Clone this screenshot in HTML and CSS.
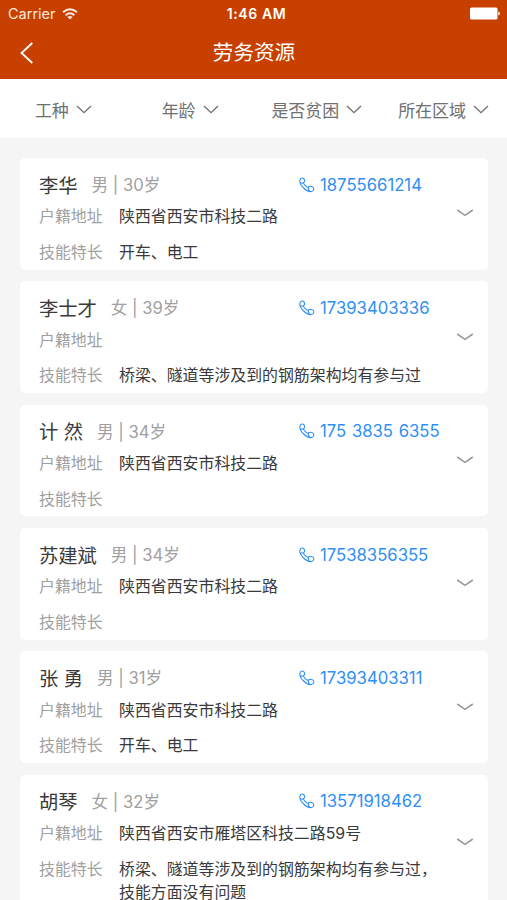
FILE: index.html
```
<!DOCTYPE html>
<html lang="zh-CN">
<head>
    <meta charset="UTF-8">
    <title>劳务资源</title>
    <link rel="stylesheet" href="styles.css">
</head>
<body>
    <!-- icons used in the list -->
    <svg class="sprite">
        <symbol id="down" viewBox="0 0 16 9">
            <path d="M1 1l7 6.600L15 1"/>
        </symbol>
        <symbol id="more" viewBox="0 0 18 8">
            <path d="M1.200 1L9 6.400 16.800 1"/>
        </symbol>
        <symbol id="phone" viewBox="0 0 16 16">
            <path d="M1.300 2.200C2 .8 4 .6 4.900 1.800c.9 1.300.8 2.800-.2 3.900-.5.6.2 1.500 1.600 2.900s2.600 1.900 3.200 1.400c1.300-1 2.900-.9 4.400.1 1.300.9 1.200 2.900-.1 3.800-2.200 1.400-6 .2-9.100-2.900S.2 4.500 1.300 2.200z"/>
            <path d="M1.500 5.500q1.800 1.200 3.100.3M9.500 10q-1 1.400 1 4"/>
        </symbol>
    </svg>

    <header class="header">
        <div class="status">
            <div class="carrier">Carrier
                <svg class="wifi" width="16" height="12" viewBox="0 0 16 12">
                    <path d="M1 4.300q7-6 14 0M3.600 7.200q4.400-3.800 8.800 0"/>
                    <path class="dot" d="M5.400 8.900q2.600-2 5.200 0L8 11.600z"/>
                </svg>
            </div>
            <div class="time">1:46 AM</div>
            <div class="power">
                <svg width="30" height="13" viewBox="0 0 30 13">
                    <rect x="0" y="0.500" width="27.500" height="12" rx="1.500"/>
                    <path d="M28.300 4.500q1.700.6 1.700 2t-1.700 2z"/>
                </svg>
            </div>
        </div>
        <div class="navbar">
            <svg class="back" width="14" height="22" viewBox="0 0 14 22"><path d="M12.300 1L1.500 11l10.800 10"/></svg>
            <h1>劳务资源</h1>
        </div>
    </header>

    <nav class="filters">
        <div class="filter">工种<svg><use href="#down"/></svg></div>
        <div class="filter">年龄<svg><use href="#down"/></svg></div>
        <div class="filter">是否贫困<svg><use href="#down"/></svg></div>
        <div class="filter">所在区域<svg><use href="#down"/></svg></div>
    </nav>

    <main class="list">
        <section class="card">
            <div class="top">
                <div class="person"><b>李华</b><span>男 | 30岁</span></div>
                <a class="phone"><svg><use href="#phone"/></svg>18755661214</a>
            </div>
            <div class="row"><label>户籍地址</label><p>陕西省西安市科技二路</p></div>
            <div class="row"><label>技能特长</label><p>开车、电工</p></div>
            <svg class="more"><use href="#more"/></svg>
        </section>

        <section class="card">
            <div class="top">
                <div class="person"><b>李士才</b><span>女 | 39岁</span></div>
                <a class="phone"><svg><use href="#phone"/></svg>17393403336</a>
            </div>
            <div class="row"><label>户籍地址</label><p></p></div>
            <div class="row"><label>技能特长</label><p>桥梁、隧道等涉及到的钢筋架构均有参与过</p></div>
            <svg class="more"><use href="#more"/></svg>
        </section>

        <section class="card">
            <div class="top">
                <div class="person"><b>计 然</b><span>男 | 34岁</span></div>
                <a class="phone"><svg><use href="#phone"/></svg>175 3835 6355</a>
            </div>
            <div class="row"><label>户籍地址</label><p>陕西省西安市科技二路</p></div>
            <div class="row"><label>技能特长</label><p></p></div>
            <svg class="more"><use href="#more"/></svg>
        </section>

        <section class="card">
            <div class="top">
                <div class="person"><b>苏建斌</b><span>男 | 34岁</span></div>
                <a class="phone"><svg><use href="#phone"/></svg>17538356355</a>
            </div>
            <div class="row"><label>户籍地址</label><p>陕西省西安市科技二路</p></div>
            <div class="row"><label>技能特长</label><p></p></div>
            <svg class="more"><use href="#more"/></svg>
        </section>

        <section class="card">
            <div class="top">
                <div class="person"><b>张 勇</b><span>男 | 31岁</span></div>
                <a class="phone"><svg><use href="#phone"/></svg>17393403311</a>
            </div>
            <div class="row"><label>户籍地址</label><p>陕西省西安市科技二路</p></div>
            <div class="row"><label>技能特长</label><p>开车、电工</p></div>
            <svg class="more"><use href="#more"/></svg>
        </section>

        <section class="card">
            <div class="top">
                <div class="person"><b>胡琴</b><span>女 | 32岁</span></div>
                <a class="phone"><svg><use href="#phone"/></svg>13571918462</a>
            </div>
            <div class="row"><label>户籍地址</label><p>陕西省西安市雁塔区科技二路59号</p></div>
            <div class="row"><label>技能特长</label><p>桥梁、隧道等涉及到的钢筋架构均有参与过，<br>技能方面没有问题</p></div>
            <svg class="more"><use href="#more"/></svg>
        </section>
    </main>
</body>
</html>
```

FILE: styles.css
```
* {
    box-sizing: border-box;
}

body {
    margin: 0;
    height: 900px;
    overflow: hidden;
    background: #f5f5f5;
    font-family: Inter, "Noto Sans CJK SC", sans-serif;
    color: #3a3a3a;
}

svg {
    fill: none;
    stroke: currentColor;
    flex: none;
}

.sprite {
    display: none;
}

.header {
    height: 79px;
    background: #c84000;
    color: white;
}

.status {
    display: grid;
    grid-template-columns: 1fr auto 1fr;
    align-items: center;
    height: 27px;
    padding: 0 7px 0 8px;
    font-size: 14.5px;
}

.carrier {
    display: flex;
    align-items: center;
    gap: 6px;
    color: #ffe9dc;
}

.wifi {
    stroke-width: 1.9;
}

.wifi .dot {
    fill: currentColor;
    stroke: none;
}

.time {
    padding-left: 5px;
    font-weight: 600;
    font-size: 14px;
    letter-spacing: 0.6px;
}

.power {
    display: flex;
    justify-content: flex-end;
}

.power svg {
    fill: white;
    stroke: none;
}

.navbar {
    display: grid;
    grid-template-columns: 1fr auto 1fr;
    align-items: center;
    height: 51px;
    padding: 0 20px;
}

.back {
    stroke-width: 1.8;
}

h1 {
    margin: 0;
    padding-left: 1px;
    font-size: 20.6px;
    font-weight: 400;
    line-height: 30px;
}

.filters {
    display: grid;
    grid-template-columns: repeat(4, 1fr);
    height: 59px;
    padding-top: 1px;
    background: white;
    color: #707070;
    font-size: 17px;
}

.filter {
    display: flex;
    justify-content: center;
    align-items: center;
    gap: 7px;
}

.filter svg {
    width: 16px;
    height: 9px;
    stroke-width: 1.3;
}

.list {
    display: flex;
    flex-direction: column;
    gap: 11.7px;
    padding: 20px 19px 0 20px;
}

.card {
    position: relative;
    flex: none;
    padding: 13px 19px 0;
    border-radius: 5px;
    background: white;
}

.top {
    display: flex;
    align-items: center;
    height: 27px;
    margin-bottom: 1.4px;
}

.person {
    display: flex;
    align-items: center;
    width: 260px;
    gap: 14px;
}

.person b {
    font-size: 19.3px;
    font-weight: 400;
}

.person span {
    padding-bottom: 1px;
    font-size: 16.6px;
    color: #a0a0a0;
}

.phone {
    display: flex;
    align-items: center;
    gap: 5px;
    color: #2e8ff5;
    font-size: 16.7px;
    white-space: pre;
    word-spacing: 1px;
}

.phone svg {
    width: 16px;
    height: 16px;
    stroke-width: 1.1;
}

.row {
    display: flex;
    gap: 16.5px;
    padding: 6px 0;
    font-size: 15.9px;
    line-height: 23.6px;
}

.row:nth-child(3) {
    padding-bottom: 5.1px;
}

.row label {
    color: #a0a0a0;
}

.row p {
    margin: 0;
    white-space: nowrap;
}

/* expand arrow sits over the rows, centered on the card */
.more {
    position: absolute;
    right: 14px;
    top: calc(50% - 4.5px);
    width: 18px;
    height: 8px;
    color: #999;
    stroke-width: 1.6;
}
```
